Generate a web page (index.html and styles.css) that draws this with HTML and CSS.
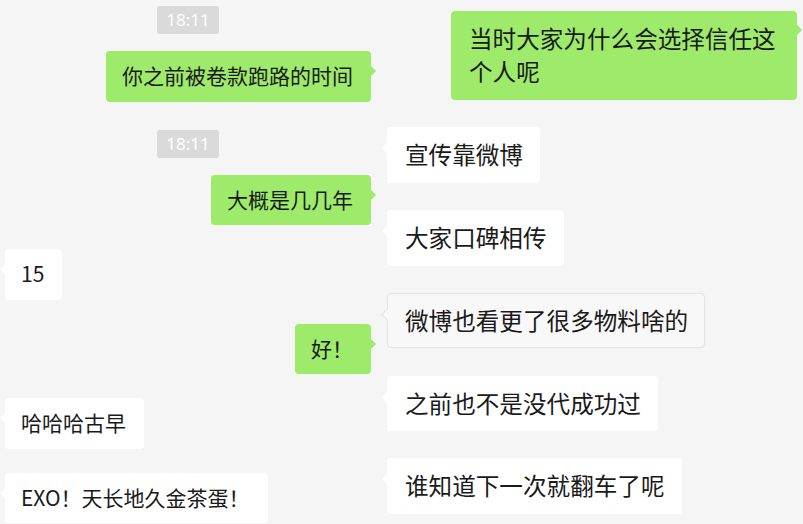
FILE: index.html
```html
<!DOCTYPE html>
<html lang="zh-CN">
<head>
    <meta charset="UTF-8">
    <meta name="viewport" content="width=device-width, initial-scale=1.0">
    <title>聊天记录</title>
    <link rel="stylesheet" href="styles.css">
</head>
<body>
    <div class="screen">
        <!-- left chat -->
        <div class="chat chat-left">
            <div class="time first">18:11</div>
            <div class="msg sent"><div class="bubble">你之前被卷款跑路的时间</div></div>
            <div class="time">18:11</div>
            <div class="msg sent"><div class="bubble">大概是几几年</div></div>
            <div class="msg recv"><div class="bubble">15</div></div>
            <div class="msg sent"><div class="bubble">好！</div></div>
            <div class="msg recv"><div class="bubble">哈哈哈古早</div></div>
            <div class="msg recv"><div class="bubble">EXO！天长地久金茶蛋！</div></div>
        </div>

        <!-- right chat -->
        <div class="chat chat-right">
            <div class="msg sent"><div class="bubble wide">当时大家为什么会选择信任这个人呢</div></div>
            <div class="msg recv"><div class="bubble">宣传靠微博</div></div>
            <div class="msg recv"><div class="bubble">大家口碑相传</div></div>
            <div class="msg recv"><div class="bubble selected">微博也看更了很多物料啥的</div></div>
            <div class="msg recv"><div class="bubble">之前也不是没代成功过</div></div>
            <div class="msg recv"><div class="bubble">谁知道下一次就翻车了呢</div></div>
        </div>
    </div>
</body>
</html>
```

FILE: styles.css
```css
body {
    margin: 0;
    background: #f5f5f5;
    font-family: "Noto Sans CJK SC", "Noto Sans", sans-serif;
    color: #1a1a1a;
}

.screen {
    display: grid;
    grid-template-columns: 380px 1fr;
    height: 524px;
    overflow: hidden;
}

.chat {
    display: flex;
    flex-direction: column;
}

.msg {
    display: flex;
}

.msg.sent {
    justify-content: flex-end;
}

.msg.recv {
    justify-content: flex-start;
}

/* Bubbles */
.bubble {
    position: relative;
    border-radius: 4px;
    white-space: normal;
    box-sizing: border-box;
}

.sent .bubble {
    background: #9eea6a;
}

.recv .bubble {
    background: #ffffff;
}

.sent .bubble::after {
    content: "";
    position: absolute;
    right: -5px;
    top: 15px;
    border-left: 5px solid #9eea6a;
    border-top: 5px solid transparent;
    border-bottom: 5px solid transparent;
}

.recv .bubble::before {
    content: "";
    position: absolute;
    left: -5px;
    top: 15px;
    border-right: 5px solid #ffffff;
    border-top: 5px solid transparent;
    border-bottom: 5px solid transparent;
}

/* Timestamp */
.time {
    align-self: center;
    width: 62px;
    height: 28px;
    margin: 28px 0 17px;
    background: #dadada;
    color: #ffffff;
    border-radius: 3px;
    font-family: "Noto Sans", sans-serif;
    font-size: 17px;
    line-height: 28px;
    text-align: center;
}

.time.first {
    margin-top: 0;
}

/* Left window */
.chat-left {
    padding: 6px 9px 0 5px;
}

.chat-left .msg + .msg {
    margin-top: 24px;
}

.chat-left .bubble {
    font-size: 21px;
    line-height: 29.5px;
    padding: 10px 18px 11px 16px;
}

/* Right window (a bit larger) */
.chat-right {
    padding: 11px 6px 0 7px;
}

.chat-right .msg + .msg {
    margin-top: 27.25px;
}

.chat-right .bubble {
    font-size: 23.6px;
    line-height: 33px;
    padding: 11px 17px 11.5px 18px;
}

.chat-right .bubble::before {
    top: 16px;
}

.chat-right .bubble.wide {
    max-width: 346px;
    padding: 11px 20px 12px 18px;
}

.chat-right .bubble.wide::after {
    top: 14px;
}

.bubble.selected {
    background: #f8f8f8;
    border: 1px solid #e4e4e4;
    padding: 10px 16px 10.5px 17px;
}

.bubble.selected::before {
    left: -5px;
    top: 16px;
    width: 8px;
    height: 8px;
    border: none;
    background: #f8f8f8;
    border-left: 1px solid #e4e4e4;
    border-bottom: 1px solid #e4e4e4;
    transform: rotate(45deg);
}
```
